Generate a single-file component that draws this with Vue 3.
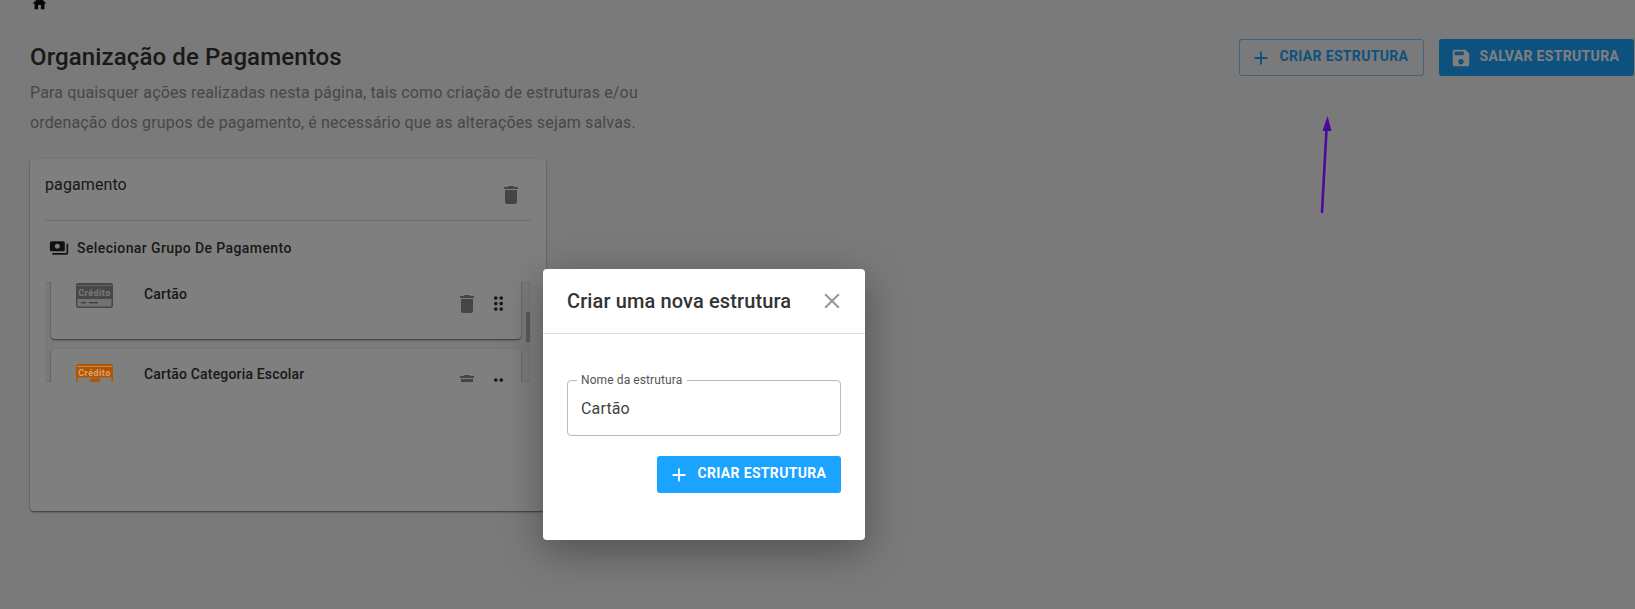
<script setup>
const icons = {
  home: 'M10 20v-6h4v6h5v-8h3L12 3 2 12h3v8z',
  plus: 'M19 13h-6v6h-2v-6H5v-2h6V5h2v6h6v2z',
  save: 'M17 3H5c-1.11 0-2 .9-2 2v14c0 1.1.89 2 2 2h14c1.1 0 2-.9 2-2V7l-4-4zm-5 16c-1.66 0-3-1.34-3-3s1.34-3 3-3 3 1.34 3 3-1.34 3-3 3zm3-10H5V5h10v4z',
  trash: 'M6 19c0 1.1.9 2 2 2h8c1.1 0 2-.9 2-2V7H6v12zM19 4h-3.5l-1-1h-5l-1 1H5v2h14V4z',
  money: 'M19 14V6c0-1.1-.9-2-2-2H3c-1.1 0-2 .9-2 2v8c0 1.1.9 2 2 2h14c1.1 0 2-.9 2-2zm-9-1c-1.66 0-3-1.34-3-3s1.34-3 3-3 3 1.34 3 3-1.34 3-3 3zm13-6v11c0 1.1-.9 2-2 2H4v-2h17V7h2z',
  drag: 'M11 18c0 1.1-.9 2-2 2s-2-.9-2-2 .9-2 2-2 2 .9 2 2zm-2-8c-1.1 0-2 .9-2 2s.9 2 2 2 2-.9 2-2-.9-2-2-2zm0-6c-1.1 0-2 .9-2 2s.9 2 2 2 2-.9 2-2-.9-2-2-2zm6 4c1.1 0 2-.9 2-2s-.9-2-2-2-2 .9-2 2 .9 2 2 2zm0 2c-1.1 0-2 .9-2 2s.9 2 2 2 2-.9 2-2-.9-2-2-2zm0 6c-1.1 0-2 .9-2 2s.9 2 2 2 2-.9 2-2-.9-2-2-2z',
  close: 'M19 6.41L17.59 5 12 10.59 6.41 5 5 6.41 10.59 12 5 17.59 6.41 19 12 13.41 17.59 19 19 17.59 13.41 12z',
}
</script>

<template>
  <div class="page">
    <svg class="home" viewBox="0 0 24 24"><path :d="icons.home" /></svg>

    <header class="top">
      <div class="intro">
        <h1>Organização de Pagamentos</h1>
        <p>Para quaisquer ações realizadas nesta página, tais como criação de estruturas e/ou ordenação dos grupos de pagamento, é necessário que as alterações sejam salvas.</p>
      </div>
      <div class="actions">
        <button class="btn outline">
          <svg viewBox="0 0 24 24"><path :d="icons.plus" /></svg>
          CRIAR ESTRUTURA
        </button>
        <button class="btn solid">
          <svg viewBox="0 0 24 24"><path :d="icons.save" /></svg>
          SALVAR ESTRUTURA
        </button>
      </div>
    </header>

    <section class="card">
      <div class="card-head">
        <span>pagamento</span>
        <svg class="trash" viewBox="0 0 24 24"><path :d="icons.trash" /></svg>
      </div>
      <div class="select-row">
        <svg viewBox="0 0 24 24"><path :d="icons.money" /></svg>
        <span>Selecionar Grupo De Pagamento</span>
      </div>
      <div class="list">
        <div class="thumb"></div>
        <article class="item first">
          <svg class="credit" viewBox="0 0 37 25">
            <rect x="0.75" y="0.75" width="35.5" height="23.5" rx="1.5" fill="#e4e4e4" stroke="#8c8c8c" stroke-width="1.5" />
            <rect x="1" y="1" width="35" height="15" fill="#909090" />
            <rect x="1" y="2" width="35" height="1" fill="#c8c8c8" />
            <text x="18.5" y="12.5" text-anchor="middle" class="credit-text">Crédito</text>
            <rect x="5" y="19" width="5" height="1.4" fill="#808080" />
            <rect x="13" y="19" width="9" height="1.4" fill="#808080" />
          </svg>
          <span class="name">Cartão</span>
          <svg class="item-trash" viewBox="0 0 24 24"><path :d="icons.trash" /></svg>
          <svg class="item-drag" viewBox="6 3.5 12 17"><path :d="icons.drag" /></svg>
        </article>
        <article class="item second">
          <svg class="credit orange" viewBox="0 0 37 25">
            <rect x="0.75" y="0.75" width="35.5" height="23.5" rx="1.5" fill="#7f7f7f" stroke="#b35500" stroke-width="1.5" />
            <rect x="1" y="1" width="35" height="12.5" fill="#b35500" />
            <rect x="1" y="2" width="35" height="1" fill="#cc8c55" />
            <text x="18.5" y="11.7" text-anchor="middle" class="credit-text orange-text">Crédito</text>
            <path d="M15 14.5h10l-2 4H13z" fill="#b35500" />
          </svg>
          <span class="name">Cartão Categoria Escolar</span>
          <svg class="item-trash" viewBox="0 0 24 24"><path :d="icons.trash" /></svg>
          <svg class="item-drag" viewBox="6 3.5 12 17"><path :d="icons.drag" /></svg>
        </article>
      </div>
    </section>

    <div class="backdrop"></div>

    <svg class="arrow" viewBox="0 0 1635 609">
      <path d="M1322 212L1326.6 128" stroke="#4b0a9c" stroke-width="2.6" stroke-linecap="round" fill="none" />
      <path d="M1327.5 116L1322.5 131H1331.5z" fill="#4b0a9c" />
    </svg>

    <div class="modal">
      <div class="modal-head">
        <h2>Criar uma nova estrutura</h2>
        <svg viewBox="0 0 24 24"><path :d="icons.close" /></svg>
      </div>
      <div class="modal-body">
        <fieldset class="field">
          <legend>Nome da estrutura</legend>
          <span>Cartão</span>
        </fieldset>
        <button class="btn solid create">
          <svg viewBox="0 0 24 24"><path :d="icons.plus" /></svg>
          CRIAR ESTRUTURA
        </button>
      </div>
    </div>
  </div>
</template>

<style scoped>
.page {
  position: relative;
  height: 609px;
  overflow: hidden;
  background: #f4f4f4;
  font-family: Roboto, "Liberation Sans", sans-serif;
  color: #333;
  box-sizing: border-box;
  padding-left: 30px;
}
.home {
  display: block;
  width: 17px;
  height: 17px;
  margin: -5px 0 0 1px;
  fill: #111;
}
.top {
  display: flex;
  justify-content: space-between;
  align-items: flex-start;
  margin-top: 27px;
}
.intro { width: 640px; }
h1 {
  margin: 0;
  font-size: 24px;
  font-weight: 500;
  line-height: 36px;
  letter-spacing: 0.12px;
  color: #333;
}
.intro p {
  margin: 3px 0 0;
  font-size: 16px;
  line-height: 30px;
  letter-spacing: 0.15px;
  color: #8f8f8f;
}
.actions {
  display: flex;
  gap: 15px;
  margin-right: 1px;
}
.btn {
  display: flex;
  align-items: center;
  height: 37px;
  box-sizing: border-box;
  border-radius: 3px;
  font-family: inherit;
  font-size: 14px;
  font-weight: 700;
  letter-spacing: 0.33px;
  padding: 0 0 3px 11px;
  white-space: nowrap;
}
.btn svg { width: 22px; height: 22px; fill: currentColor; margin: 3px 7.5px 0 0; flex: none; }
.outline {
  width: 185px;
  background: transparent;
  border: 1px solid rgba(27, 163, 255, .55);
  color: #1ba3ff;
  padding-left: 10px;
}
.solid {
  background: #1aa3ff;
  border: 0;
  color: #fff;
}
.actions .solid { width: 195px; }
.card {
  width: 516px;
  height: 352px;
  box-sizing: border-box;
  margin-top: 21px;
  padding: 0 15px;
  background: #fff;
  border-radius: 4px;
  box-shadow: 0 1px 2px rgba(0,0,0,.55);
}
.card-head {
  display: flex;
  justify-content: space-between;
  height: 62px;
  border-bottom: 1px solid #ddd;
  padding-top: 16px;
  box-sizing: border-box;
  font-size: 16px;
  line-height: 20px;
  letter-spacing: 0.1px;
}
.trash { width: 24px; height: 24px; margin: 8px 8px 0 0; fill: #8a8a8a; }
.select-row {
  display: flex;
  align-items: center;
  gap: 8px;
  height: 55px;
  padding: 0 0 2px 4px;
  box-sizing: border-box;
  font-size: 14px;
  font-weight: 500;
  letter-spacing: 0.4px;
}
.select-row svg { width: 20px; height: 20px; fill: #222; }
.list {
  position: relative;
  height: 100px;
  margin-top: 6px;
  padding: 0 10px 0 6px;
  overflow: hidden;
  background: #f4f4f4;
  border-radius: 3px;
  box-shadow: inset 0 1px 0 #e2e2e2, inset 0 -1px 0 #e2e2e2;
}
.thumb {
  position: absolute;
  right: 1px;
  top: 30px;
  width: 4px;
  height: 30px;
  background: #b5b5b5;
}
.item {
  position: relative;
  height: 87px;
  background: #fff;
  border-radius: 4px;
  box-shadow: 0 1px 2px rgba(0,0,0,.6);
}
.first { margin-top: -30px; margin-bottom: 10px; }
.credit {
  position: absolute;
  left: 25px;
  width: 37px;
  height: 25px;
}
.first .credit { top: 31px; }
.second .credit { top: 15px; }
.orange { z-index: 2; }
.credit-text {
  font-family: Roboto, sans-serif;
  font-size: 9px;
  font-weight: 700;
  fill: #f2f2f2;
  letter-spacing: 0.45px;
}
.orange-text { fill: #d9a474; }
.name {
  position: absolute;
  left: 93px;
  font-size: 14px;
  font-weight: 500;
  line-height: 18px;
  letter-spacing: 0.17px;
}
.first .name { top: 33px; }
.second .name { top: 16px; }
.item-trash {
  position: absolute;
  left: 404px;
  width: 24px;
  height: 24px;
  fill: #8a8a8a;
}
.first .item-trash { top: 40px; }
.second .item-trash { top: 23px; }
.item-drag {
  position: absolute;
  left: 442px;
  width: 11px;
  height: 17px;
  fill: #333;
}
.first .item-drag { top: 43px; }
.second .item-drag { top: 28px; }
.backdrop {
  position: absolute;
  inset: 0;
  z-index: 1;
  background: rgba(0,0,0,.5);
}
.arrow {
  position: absolute;
  inset: 0;
  z-index: 3;
  width: 1635px;
  height: 609px;
  pointer-events: none;
}
.modal {
  position: absolute;
  z-index: 4;
  left: 543px;
  top: 269px;
  width: 322px;
  height: 271px;
  background: #fff;
  border-radius: 4px;
  box-shadow: 0 11px 40px rgba(0,0,0,.35);
}
.modal-head {
  display: flex;
  align-items: center;
  justify-content: space-between;
  height: 65px;
  box-sizing: border-box;
  border-bottom: 1px solid #ddd;
  padding: 0 20px 0 24px;
}
h2 {
  margin: 0;
  font-size: 20px;
  font-weight: 500;
  letter-spacing: 0.12px;
  color: #333;
}
.modal-head svg { width: 26px; height: 26px; fill: #999; }
.modal-body {
  display: flex;
  flex-direction: column;
  align-items: flex-end;
  padding: 0 24px;
}
.field {
  width: 274px;
  height: 63px;
  box-sizing: border-box;
  margin: 39px 0 0;
  padding: 0 13px;
  border: 1px solid #bbb;
  border-radius: 4px;
  font-size: 16px;
  letter-spacing: 0.15px;
  color: #444;
  min-inline-size: 0;
}
.field legend {
  padding: 0 5px 0 4px;
  margin-left: -4px;
  font-size: 12px;
  line-height: 14px;
  letter-spacing: 0.1px;
  color: #555;
}
.field span { display: block; margin-top: 12px; line-height: 20px; }
.create {
  width: 184px;
  margin-top: 20px;
}
</style>
